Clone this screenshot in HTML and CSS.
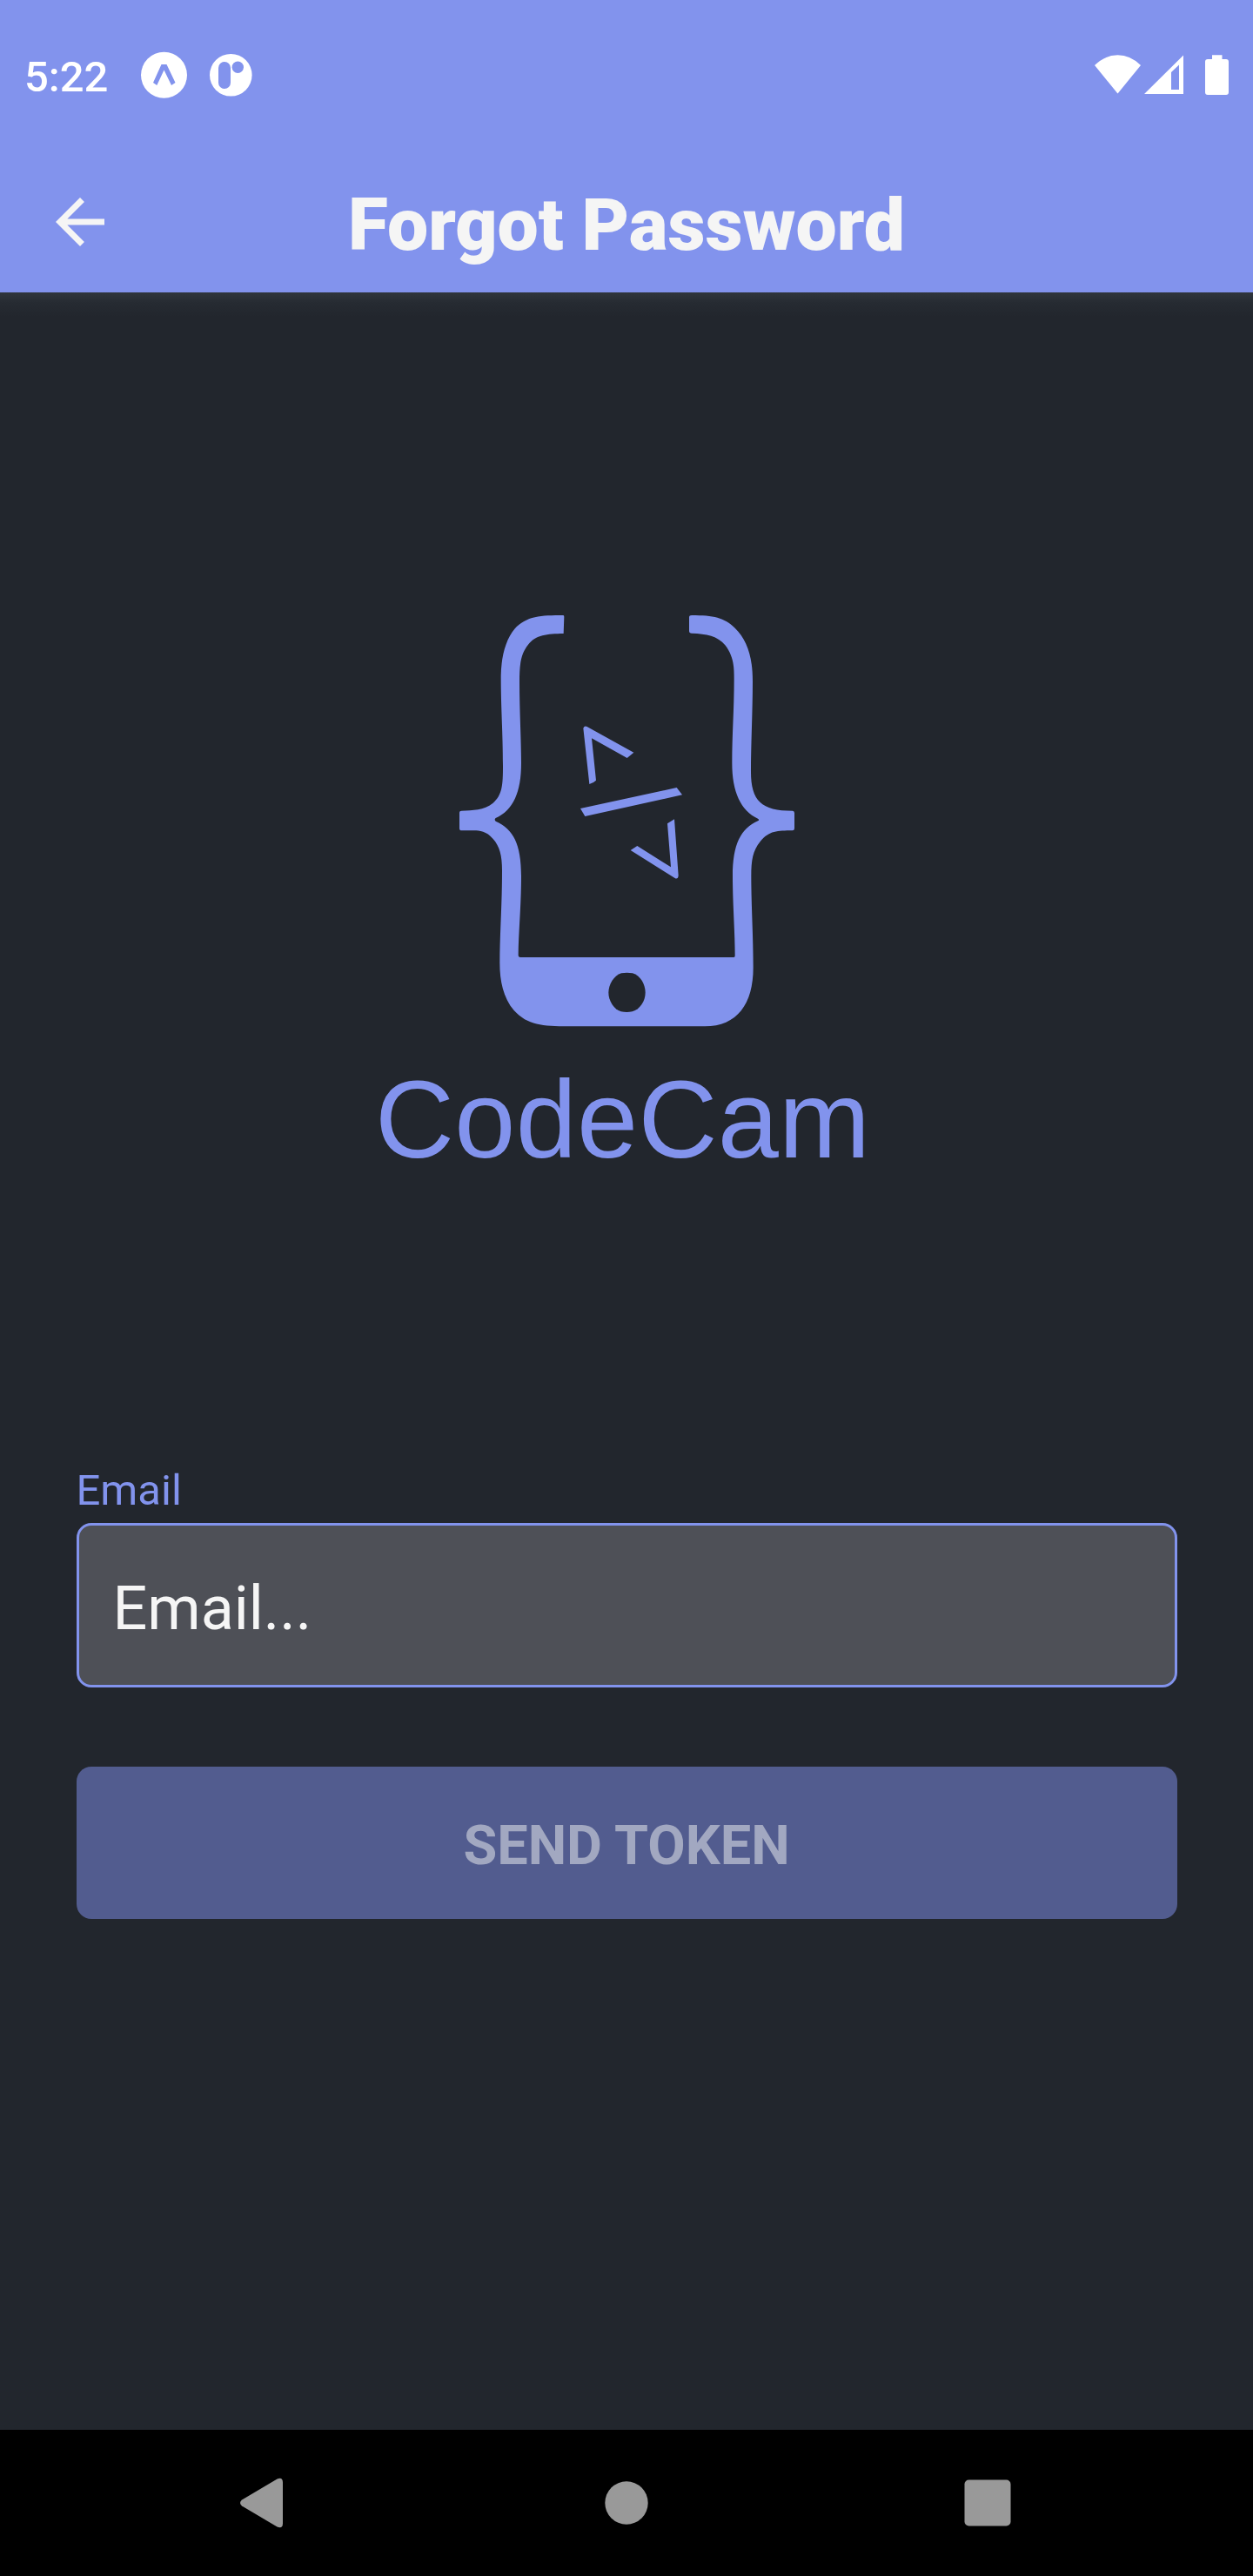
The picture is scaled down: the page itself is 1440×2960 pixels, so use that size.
FILE: index.html
```html
<!DOCTYPE html>
<html lang="en">
<head>
<meta charset="utf-8">
<title>Forgot Password</title>
<link rel="stylesheet" href="styles.css">
</head>
<body>
<div class="screen">
  <div class="status-bar">
    <span class="clock">5:22</span>
    <svg class="status-left" width="130" height="60" viewBox="160 55 130 60" fill="#fff">
      <circle cx="188.5" cy="86.3" r="26.5"/>
      <path d="M185.5 74H191.5L201.5 95L197 98L188.5 80.5L180.300 98L176 95Z" fill="#8293ed"/>
      <circle cx="265.300" cy="86.300" r="24.300"/>
      <rect x="251" y="71" width="14" height="31" rx="7" fill="#8293ed"/>
      <circle cx="273.300" cy="77.300" r="6.700" fill="#8293ed"/>
    </svg>
    <svg class="status-right" width="180" height="60" viewBox="1250 55 180 60" fill="#fff">
      <path d="M1258 75Q1270 63.300 1284.500 63.300T1311 75L1284.500 107.500Z"/>
      <path fill-rule="evenodd" d="M1315 108L1360 63.500V108ZM1346 83V103H1355V74.500Z"/>
      <path d="M1393 63.300H1404.500V68H1409Q1412 68 1412 71V106Q1412 109 1409 109H1388Q1385 109 1385 106V71Q1385 68 1388 68H1393Z"/>
    </svg>
  </div>
  <header class="app-bar">
    <svg class="back" width="84" height="84" viewBox="0 0 24 24" fill="#f5f5f5"><path d="M20 11H7.830l5.590-5.590L12 4l-8 8 8 8 1.410-1.410L7.830 13H20v-2z"/></svg>
    <h1 class="title">Forgot Password</h1>
  </header>
  <main class="content">
    <svg class="logo" width="600" height="680" viewBox="420 690 600 680" fill="#8293ed">
      <g transform="translate(510 690) scale(.333333)">
        <path fill-rule="evenodd" d="M412 51Q415 51 415 56L413 114C355 115 318 118 291 152C266 184 261 217 261 280C261 380 267 480 267 560C267 660 240 722 179 750Q173 755 179 761C240 788 267 840 267 950C267 1050 258 1140 257 1222Q257 1230 264 1230H1000Q1004 1230 1004 1225C1004 1140 996 1050 996 950C996 840 1024 787 1083 760Q1090 756 1083 752C1024 724 994 660 994 560C994 460 1001 380 1001 270C1001 230 1000 193 970 154C945 122 905 115 855 113Q846 113 846 105V58Q846 51 855 51C930 51 967 59 1004 95C1045 136 1065 190 1065 280C1065 380 1059 500 1059 590C1059 690 1095 725 1203 725Q1209 726 1209 733V786Q1209 793 1202 793C1150 794 1122 793 1091 831C1065 863 1060 896 1060 950C1060 1050 1067 1150 1067 1265C1067 1390 1012 1468 900 1468H430C340 1467 290 1465 242 1413C205 1370 193 1310 193 1250C193 1150 201 1050 201 930C201 880 193 848 170 822C147 795 123 793 105 793H62Q54 793 54 785V731Q54 725 61 725C100 723 138 724 169 699C202 671 204 636 204 570C204 450 197 380 197 260C198 190 215 133 244 98C285 53 335 51 412 51Z"/>
        <path fill="#22262d" d="M612 1285Q631 1282 651 1285C678 1293 695 1323 695 1352C695 1381 677 1408 650 1417Q631 1421 611 1417C586 1409 568 1379 568 1352C568 1323 587 1293 612 1285Z"/>
        <path d="M481 440Q485 431 494 435L655 524L632 543L510 475L525 620Q515 630 502 633Z"/>
        <path d="M471 717L803 645L822 670L487 744Z"/>
        <path d="M771 769L795 754L809 948Q808 961 798 958L644 861L667 846L783 919Z"/>
      </g>
      <text class="logo-text" x="431" y="1330" textLength="569">CodeCam</text>
    </svg>
    <form class="form">
      <label class="label" for="email">Email</label>
      <input class="field" id="email" type="text" placeholder="Email...">
      <button class="submit" type="button">SEND TOKEN</button>
    </form>
  </main>
  <nav class="nav-bar">
    <svg width="1440" height="168" viewBox="0 2792 1440 168" fill="#999">
      <path d="M278 2872.500L318.500 2848.500Q325 2846 325 2852.500V2899.500Q325 2906 318.500 2903.500L278 2879.500Q274 2876 278 2872.500Z"/>
      <circle cx="720" cy="2876" r="24.700"/>
      <rect x="1108.500" y="2849.500" width="53" height="53" rx="5"/>
    </svg>
  </nav>
</div>
</body>
</html>
```
FILE: styles.css
```css
* { box-sizing: border-box; }
body { margin: 0; background: #22262d; font-family: Roboto, sans-serif; }
.screen { display: flex; flex-direction: column; width: 1440px; height: 2960px; background: #22262d; }
.status-bar { display: flex; align-items: flex-start; height: 168px; padding: 55px 10px 0 28px; background: #8293ed; color: #fff; }
.clock { width: 132px; padding-top: 5px; font-size: 49px; line-height: 57px; font-weight: 500; }
.status-right { margin-left: auto; }
.app-bar { display: grid; grid-template-columns: 134px 1fr 134px; align-items: center; height: 168px; background: #8293ed; }
.back { margin: 6px 0 0 50px; }
.title { margin: 13px 0 0; color: #f5f5f5; font-size: 84px; line-height: 98px; font-weight: 900; text-align: center; white-space: nowrap; }
.content { display: flex; flex: 1; flex-direction: column; align-items: center; padding-top: 354px; background: linear-gradient(#30363d, #262b32 12px, #22262d 28px); }
.logo { display: block; }
.logo-text { font-family: "Liberation Sans", Arial, sans-serif; font-size: 126px; }
.form { display: flex; flex-direction: column; width: 1265px; margin-top: 314px; }
.label { color: #8293ed; font-size: 49px; line-height: 57px; }
.field { height: 189px; margin-top: 9px; padding: 6px 39px 0; border: 3px solid #8293ed; border-radius: 17px; background: #4e5057; color: #f5f5f5; font: 400 70px/82px Roboto, sans-serif; }
.field::placeholder { color: #f5f5f5; opacity: 1; }
.submit { height: 175px; margin-top: 91px; padding: 6px 0 0; border: 0; border-radius: 17px; background: #525c8f; color: #a2a8c1; font: 700 63px/74px Roboto, sans-serif; }
.nav-bar { height: 168px; background: #000; }
.nav-bar svg { display: block; }
```
